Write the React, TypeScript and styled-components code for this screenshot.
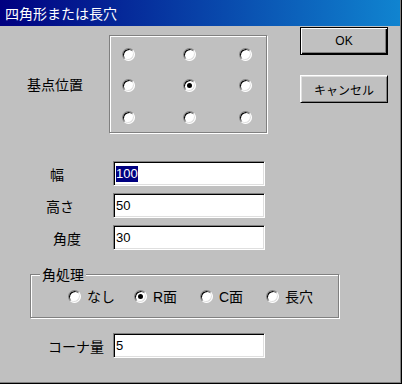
import React from 'react'
import styled, { createGlobalStyle } from 'styled-components'

const GlobalStyle = createGlobalStyle`
  html, body {
    margin: 0;
    padding: 0;
    background: #c0c0c0;
  }
  body {
    font-family: "Liberation Sans", "Noto Sans CJK JP", sans-serif;
    font-size: 14px;
    color: #000;
  }
`

const Window = styled.div`
  width: 402px;
  height: 384px;
  box-sizing: border-box;
  background: #c0c0c0;
  border-right: 1px solid #000;
  border-bottom: 1px solid #000;
  box-shadow: inset -1px -1px 0 #808080;
  display: flex;
  flex-direction: column;
  overflow: hidden;
`

const TitleBar = styled.div`
  height: 26px;
  flex: none;
  margin-right: 1px;
  background: linear-gradient(to right, #000080, #1084d0);
  color: #fff;
  display: flex;
  align-items: center;
  padding-left: 5px;
  font-family: "Noto Sans CJK JP", sans-serif;
  font-size: 14px;
  line-height: 1;
`

const Body = styled.div`
  display: flex;
  flex-direction: column;
`

const TopRow = styled.div`
  display: flex;
  align-items: flex-start;
  padding-top: 1px;
`

const SideLabel = styled.div`
  width: 82px;
  padding-left: 27px;
  height: 98px;
  margin-top: 8px;
  display: flex;
  align-items: center;
  font-family: "Noto Sans CJK JP", sans-serif;
`

const GroupBox = styled.div`
  box-sizing: border-box;
  border: 1px solid #808080;
  box-shadow: 1px 1px 0 #fff, inset 1px 1px 0 #fff;
`

const PointBox = styled(GroupBox)`
  width: 158px;
  height: 98px;
  margin-top: 8px;
  display: grid;
  grid-template-columns: 61px 56px 13px;
  grid-template-rows: 31px 32px 13px;
  padding: 12px 0 0 12px;
`

const ButtonColumn = styled.div`
  display: flex;
  flex-direction: column;
  gap: 20px;
  margin-left: 33px;
`

const Button = styled.button<{ $default?: boolean }>`
  width: 88px;
  height: 28px;
  box-sizing: border-box;
  background: #c0c0c0;
  font-family: "Liberation Sans", "Noto Sans CJK JP", sans-serif;
  font-size: 12px;
  color: #000;
  padding: 0;
  border: 1px solid;
  border-color: ${p => (p.$default ? '#000' : '#fff #000 #000 #fff')};
  box-shadow: ${p =>
    p.$default
      ? 'inset 1px 1px 0 #fff, inset -1px -1px 0 #000, inset -2px -2px 0 #808080'
      : 'inset 1px 1px 0 #dfdfdf, inset -1px -1px 0 #808080'};
`

const Radio = styled.span<{ $checked?: boolean }>`
  position: relative;
  display: inline-block;
  width: 13px;
  height: 13px;
  box-sizing: border-box;
  border-radius: 50%;
  background: #fff;
  border: 1px solid;
  border-color: #808080 #fff #fff #808080;
  box-shadow: inset 1px 1px 0 #000, inset -1px -1px 0 #dfdfdf;
  flex: none;

  &::after {
    content: '';
    display: ${p => (p.$checked ? 'block' : 'none')};
    position: absolute;
    left: 3px;
    top: 3px;
    width: 5px;
    height: 5px;
    border-radius: 50%;
    background: #000;
  }
`

const Fields = styled.div`
  display: flex;
  flex-direction: column;
  gap: 7px;
  margin-top: 28px;
`

const FieldRow = styled.div`
  display: flex;
  align-items: center;
  height: 25px;
`

const FieldLabel = styled.span<{ $indent: number }>`
  width: ${p => 113 - p.$indent}px;
  padding-left: ${p => p.$indent}px;
  font-family: "Noto Sans CJK JP", sans-serif;
`

const Edit = styled.div`
  width: 152px;
  height: 25px;
  box-sizing: border-box;
  background: #fff;
  border: 1px solid;
  border-color: #808080 #fff #fff #808080;
  box-shadow: inset 1px 1px 0 #000, inset -1px -1px 0 #dfdfdf;
  display: flex;
  align-items: center;
  padding-left: 2px;
  font-size: 13px;
`

const Selected = styled.span`
  background: #000080;
  color: #fff;
  line-height: 16px;
`

const CornerGroup = styled(GroupBox)`
  position: relative;
  width: 309px;
  height: 44px;
  margin: 24px 0 0 30px;
  display: flex;
  align-items: center;
  padding-left: 37px;
`

const Legend = styled.span`
  position: absolute;
  left: 9px;
  top: -10px;
  padding: 0 2px;
  background: #c0c0c0;
  font-family: "Noto Sans CJK JP", sans-serif;
  line-height: 18px;
`

const Option = styled.label`
  width: 66px;
  flex: none;
  display: flex;
  align-items: center;
  gap: 6px;
  font-family: "Liberation Sans", "Noto Sans CJK JP", sans-serif;
`

const BottomRow = styled(FieldRow)`
  margin-top: 15px;
`

const points = [false, false, false, false, true, false, false, false, false]
const corners = [
  { label: 'なし', checked: false },
  { label: 'R面', checked: true },
  { label: 'C面', checked: false },
  { label: '長穴', checked: false },
]

const App = () => (
  <>
    <GlobalStyle />
    <Window>
      <TitleBar>四角形または長穴</TitleBar>
      <Body>
        <TopRow>
          <SideLabel>基点位置</SideLabel>
          <PointBox>
            {points.map((on, i) => <Radio key={i} $checked={on} />)}
          </PointBox>
          <ButtonColumn>
            <Button $default>OK</Button>
            <Button>キャンセル</Button>
          </ButtonColumn>
        </TopRow>

        <Fields>
          <FieldRow>
            <FieldLabel $indent={50}>幅</FieldLabel>
            <Edit><Selected>100</Selected></Edit>
          </FieldRow>
          <FieldRow>
            <FieldLabel $indent={46}>高さ</FieldLabel>
            <Edit>50</Edit>
          </FieldRow>
          <FieldRow>
            <FieldLabel $indent={53}>角度</FieldLabel>
            <Edit>30</Edit>
          </FieldRow>
        </Fields>

        <CornerGroup>
          <Legend>角処理</Legend>
          {corners.map(c => (
            <Option key={c.label}>
              <Radio $checked={c.checked} />
              {c.label}
            </Option>
          ))}
        </CornerGroup>

        <BottomRow>
          <FieldLabel $indent={48}>コーナ量</FieldLabel>
          <Edit>5</Edit>
        </BottomRow>
      </Body>
    </Window>
  </>
)

export default App
